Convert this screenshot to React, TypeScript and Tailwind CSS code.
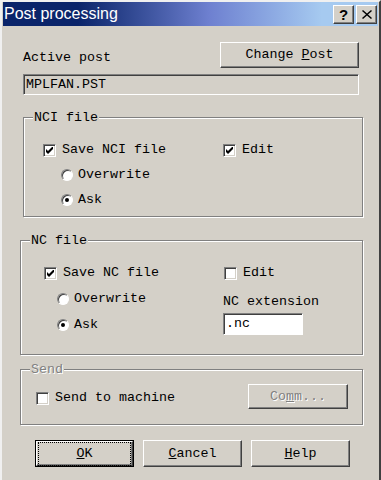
import type { ReactNode } from 'react';

const raised =
  'border border-t-white border-l-white border-r-[#404040] border-b-[#404040] shadow-[inset_-1px_-1px_0_#808080]';
const sunken =
  'border border-t-[#808080] border-l-[#808080] border-r-white border-b-white shadow-[inset_1px_1px_0_#404040,inset_-1px_-1px_0_#d4d0c8]';

function CheckBox({ checked, label, disabled }: { checked?: boolean; label: string; disabled?: boolean }) {
  return (
    <div className="flex items-center gap-[6px] h-[16px]">
      <span className={`w-[13px] h-[13px] bg-white ${sunken} flex items-center justify-center shrink-0`}>
        {checked && (
          <svg width="7" height="7" viewBox="0 0 7 7">
            <path d="M0 2 L0 5 L2 7 L7 2 L7 -1 L2 4 Z" fill="#000" />
          </svg>
        )}
      </span>
      <span className={disabled ? 'text-[#808080]' : ''}>{label}</span>
    </div>
  );
}

function Radio({ checked, label }: { checked?: boolean; label: string }) {
  return (
    <div className="flex items-center gap-[5px] h-[16px]">
      <span className="w-[12px] h-[12px] rounded-full bg-white border border-t-[#808080] border-l-[#808080] border-r-white border-b-white shadow-[inset_1px_1px_0_#404040] flex items-center justify-center shrink-0">
        {checked && <span className="w-[4px] h-[4px] rounded-full bg-black" />}
      </span>
      <span>{label}</span>
    </div>
  );
}

function Group({ title, disabled, className, children }: { title: string; disabled?: boolean; className: string; children: ReactNode }) {
  return (
    <div
      className={`relative border border-[#808080] shadow-[inset_1px_1px_0_#fff,1px_1px_0_#fff] ${className}`}
    >
      <span
        className={`absolute -top-[8px] left-[9px] px-[1px] bg-[#d4d0c8] leading-[16px] ${
          disabled ? 'text-[#808080] [text-shadow:1px_1px_0_#fff]' : ''
        }`}
      >
        {title}
      </span>
      {children}
    </div>
  );
}

function Button({ children, className }: { children: ReactNode; className: string }) {
  return <div className={`flex items-center justify-center bg-[#d4d0c8] ${raised} ${className}`}>{children}</div>;
}

export default function App() {
  return (
    <div className="w-[381px] h-[480px] overflow-hidden bg-[#d4d0c8] border-l-2 border-l-[#f0f0f0] border-r-2 border-r-[#404040] border-t-2 border-t-[#f0f0f0] font-['Liberation_Mono',monospace] text-[13.33px] text-black">
      {/* title bar */}
      <div className="h-[24px] ml-[1px] mr-[1px] flex items-center justify-between bg-gradient-to-r from-[#0a246a] from-20% via-[#6e80d0] via-55% to-[#a6caf0] to-85%">
        <span className="pl-[1px] font-['Liberation_Sans',sans-serif] text-[16px] text-white">Post processing</span>
        <div className="flex gap-[2px] pr-[1px]">
          <Button className="w-[21px] h-[19px]">
            <span className="font-['Liberation_Sans',sans-serif] font-bold text-[15px] leading-none">?</span>
          </Button>
          <Button className="w-[21px] h-[19px]">
            <svg width="10" height="9" viewBox="0 0 10 9">
              <path d="M1 0 L5 3.5 L9 0 L10 1 L6 4.5 L10 8 L9 9 L5 5.5 L1 9 L0 8 L4 4.5 L0 1 Z" fill="#000" />
            </svg>
          </Button>
        </div>
      </div>

      <div className="pl-[21px] pr-[20px]">
        <div className="mt-[16px] flex justify-between items-start">
          <span className="pt-[8px] leading-[16px]">Active post</span>
          <Button className="w-[139px] h-[26px]">
            <span>
              Change <span className="underline">P</span>ost
            </span>
          </Button>
        </div>
        <div className={`mt-[6px] h-[21px] flex items-center pl-[2px] ${sunken}`}>MPLFAN.PST</div>

        <Group title="NCI file" className="mt-[22px] h-[100px] mr-[-4px]">
          <div className="pl-[19px] pt-[24px] flex">
            <div className="w-[180px]">
              <CheckBox checked label="Save NCI file" />
            </div>
            <CheckBox checked label="Edit" />
          </div>
          <div className="pl-[37px] pt-[9px] flex flex-col gap-[9px]">
            <Radio label="Overwrite" />
            <Radio checked label="Ask" />
          </div>
        </Group>

        <Group title="NC file" className="mt-[23px] h-[115px] ml-[-3px] mr-[-4px]">
          <div className="pl-[23px] pt-[24px] flex">
            <div className="w-[180px]">
              <CheckBox checked label="Save NC file" />
            </div>
            <CheckBox label="Edit" />
          </div>
          <div className="flex">
            <div className="pl-[36px] pt-[10px] w-[202px] flex flex-col gap-[10px]">
              <Radio label="Overwrite" />
              <Radio checked label="Ask" />
            </div>
            <div className="pt-[13px]">
              <div className="leading-[16px]">NC extension</div>
              <div className={`mt-[3px] w-[80px] h-[22px] bg-white flex items-center pl-[2px] ${sunken} shadow-[inset_1px_1px_0_#404040]`}>
                .nc
              </div>
            </div>
          </div>
        </Group>

        <Group title="Send" disabled className="mt-[14px] h-[56px] ml-[-3px] mr-[-4px]">
          <div className="pl-[15px] pr-[14px] pt-[14px] flex items-start justify-between">
            <div className="pt-[6px]">
              <CheckBox label="Send to machine" />
            </div>
            <Button className="w-[100px] h-[25px]">
              <span className="text-[#808080] [text-shadow:1px_1px_0_#fff]">
                Co<span className="underline">m</span>m...
              </span>
            </Button>
          </div>
        </Group>

        <div className="mt-[15px] ml-[12px] flex gap-[9px]">
          <div className="w-[99px] h-[27px] border border-black">
            <Button className="w-full h-full">
              <span className="px-[1px] outline outline-1 outline-dotted outline-black outline-offset-[3px] w-[85px] h-[16px] flex items-center justify-center">
                <span>
                  <span className="underline">O</span>K
                </span>
              </span>
            </Button>
          </div>
          <Button className="w-[99px] h-[27px]">
            <span>
              <span className="underline">C</span>ancel
            </span>
          </Button>
          <Button className="w-[99px] h-[27px]">
            <span>
              <span className="underline">H</span>elp
            </span>
          </Button>
        </div>
      </div>
    </div>
  );
}
